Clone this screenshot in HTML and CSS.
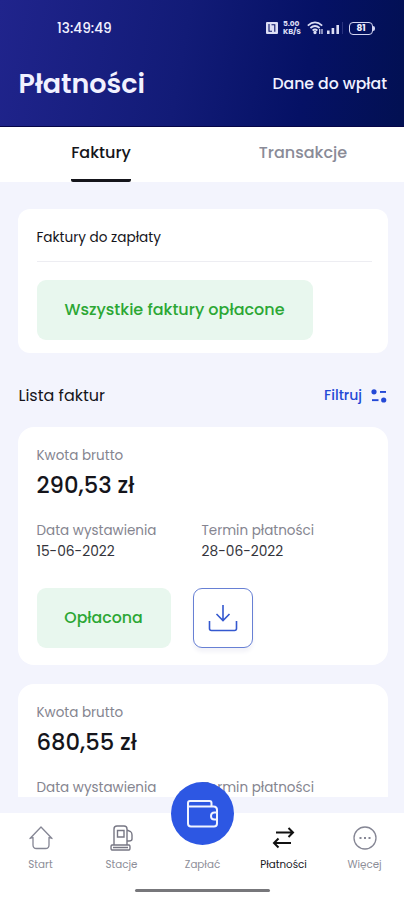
FILE: index.html
```html
<!DOCTYPE html>
<html lang="pl">
<head>
<meta charset="utf-8">
<title>Płatności</title>
<link rel="stylesheet" href="styles.css">
</head>
<body>
<div class="app">
  <header class="header">
    <div class="status">
      <span class="clock">13:49:49</span>
      <div class="status-icons">
        <svg width="12" height="12" viewBox="0 0 12 12"><rect width="12" height="12" rx="1" fill="#dcdef5"/><path d="M3 2v7.300h3M5.500 2.700h3.300v7" fill="none" stroke="#0b1468" stroke-width="1.100"/></svg>
        <span class="speed"><b>5.00</b><b>KB/S</b></span>
        <svg class="wifi" width="17" height="14" viewBox="0 0 17 14" fill="none" stroke="#dcdef5" stroke-width="1.700"><path d="M.8 4.600Q8-1.800 15.200 4.600M3.400 7Q8 3 12.600 7M5.600 9.500Q8 7.500 10.400 9.500"/><circle cx="8" cy="11.500" r=".8" fill="#dcdef5"/><path d="M12.700 8v5M15 8v5" stroke-width="1.200"/></svg>
        <svg class="signal" width="17" height="12" viewBox="0 0 17 12"><path d="M0 8.500h2.600V12H0zM4.600 6h2.600v6H4.600zM9.400 3H12v9H9.400z" fill="#dcdef5"/><path d="M15 0h1v12h-1z" fill="#29327f"/></svg>
        <span class="battery">81</span>
      </div>
    </div>
    <div class="title-row">
      <h1>Płatności</h1>
      <a class="pay-data">Dane do wpłat</a>
    </div>
  </header>
  <nav class="tabs">
    <div class="tab active"><span>Faktury</span></div>
    <div class="tab"><span>Transakcje</span></div>
  </nav>
  <main class="content">
    <section class="card due">
      <h2>Faktury do zapłaty</h2>
      <div class="badge wide"><span>Wszystkie faktury opłacone</span></div>
    </section>
    <div class="list-head">
      <span class="list-title">Lista faktur</span>
      <a class="filter"><span>Filtruj</span>
        <svg width="16" height="14" viewBox="0 0 16 14" fill="#2449d6"><circle cx="3" cy="2.800" r="2.600"/><rect x="9" y="2" width="6" height="1.900"/><rect x="1" y="10.200" width="6.500" height="1.900"/><circle cx="12.700" cy="11" r="2.600"/></svg>
      </a>
    </div>
    <article class="card invoice">
      <div class="label">Kwota brutto</div>
      <div class="amount">290,53 zł</div>
      <div class="dates">
        <div><div class="label">Data wystawienia</div><div class="date">15-06-2022</div></div>
        <div><div class="label">Termin płatności</div><div class="date">28-06-2022</div></div>
      </div>
      <div class="actions">
        <div class="badge paid"><span>Opłacona</span></div>
        <button class="download" aria-label="Pobierz"><svg width="30" height="28" viewBox="0 0 30 28" fill="none" stroke="#3458cf" stroke-width="1.600"><path d="M15 1v15M8.500 10l6.500 6.500L21.500 10"/><path d="M1.500 17v7.500q0 2 2 2h23q2 0 2-2V17"/></svg></button>
      </div>
    </article>
    <article class="card invoice cut">
      <div class="label">Kwota brutto</div>
      <div class="amount">680,55 zł</div>
      <div class="dates">
        <div><div class="label">Data wystawienia</div></div>
        <div><div class="label">Termin płatności</div></div>
      </div>
    </article>
  </main>
  <footer class="bottom">
    <div class="item"><svg width="26" height="26" viewBox="0 0 26 26" fill="none" stroke="#858694" stroke-width="1.300" stroke-linejoin="round"><path d="M2 13.500 13 2l11 11.500-3-1V20q0 3.500-3.500 3.500h-9Q5 23.500 5 20v-7.500z"/></svg><span>Start</span></div>
    <div class="item"><svg width="26" height="26" viewBox="0 0 26 26" fill="none" stroke="#777784" stroke-width="1.400"><path d="M5 20V4q0-3 3-3h7q3 0 3 3v16M8.500 5.500H15V12H8.500zM3 20h17q1 0 1 2.500T20 25H3q-1 0-1-2.500T3 20zM4 22.500h15M18 5l3.500 1.500Q23 7.500 23 10v4q0 2-3 2h-2"/></svg><span>Stacje</span></div>
    <div class="item"><i class="spacer"></i><span>Zapłać</span>
      <div class="fab"><svg width="34" height="30" viewBox="0 0 34 30" fill="none" stroke="#f1f4ff" stroke-width="2" stroke-linejoin="round"><path d="M25.500 7.500V4q0-2-2-2H4Q2 2 2 4v20.500q0 3 3 3h23q3 0 3-3V11q0-3.500-3.500-3.500H2M31 13.500h-2.500Q25 13.500 25 17t3.500 3.500H31"/></svg></div>
    </div>
    <div class="item on"><svg width="26" height="26" viewBox="0 0 26 26" fill="none" stroke="#111" stroke-width="2"><path d="M5 7.500h17M17.500 3l4.500 4.500-4.500 4.500M20 18H3M7.500 13.500 3 18l4.500 4.500"/></svg><span>Płatności</span></div>
    <div class="item"><svg width="26" height="26" viewBox="0 0 26 26" fill="none" stroke="#858694" stroke-width="1.300"><circle cx="13" cy="13" r="11"/><path d="M7.500 13h2M12 13h2M16.500 13h2" stroke-width="1.800"/></svg><span>Więcej</span></div>
    <div class="handle"></div>
  </footer>
</div>
</body>
</html>
```
FILE: styles.css
```css
* { box-sizing: border-box; }
body { margin: 0; font-family: Poppins, Inter, sans-serif; color: #15151b; }
h1, h2 { margin: 0; }
span { white-space: nowrap; }
.app { width: 404px; height: 900px; overflow: hidden; display: flex; flex-direction: column; background: #f3f4fd; }
.header { height: 127px; background: linear-gradient(100deg, #20248c 0%, #121b77 45%, #051165 75%, #021052 100%); color: #f1f1ff; border-bottom: 1px solid #060547; }
.status { display: flex; justify-content: space-between; height: 56px; padding: 0 30px 0 57px; align-items: center; }
.clock { font-size: 13.7px; font-weight: 500; padding-top: 1px; }
.status-icons { display: flex; align-items: center; gap: 5px; }
.speed { display: flex; flex-direction: column; font-size: 7.5px; line-height: 8px; letter-spacing: -.1px; width: 19px; color: #dcdef5; }
.speed b { height: 8px; }
.signal { margin-left: -2px; }
.battery { position: relative; border: 1.5px solid #d4d6f2; border-radius: 4px; width: 24px; height: 13px; font-size: 9px; font-weight: 700; line-height: 11px; text-align: center; margin-right: 1px; }
.battery::after { content: ""; position: absolute; right: -3px; top: 3px; width: 2px; height: 5px; border-radius: 0 2px 2px 0; background: #d4d6f2; }
.title-row { display: flex; justify-content: space-between; align-items: center; height: 56px; padding: 0 17px 0 18.5px; }
h1 { font-size: 27px; font-weight: 600; }
.pay-data { font-size: 15.7px; font-weight: 500; margin-top: -2px; }
.tabs { display: grid; grid-template-columns: 1fr 1fr; height: 55px; background: #fff; }
.tab { display: flex; justify-content: center; font-size: 16px; font-weight: 500; line-height: 52px; color: #8a8b97; }
.active { color: #15151b; }
.active span { border-bottom: 3px solid #15151b; border-radius: 2px; }
.content { padding: 27px 16px 0 18px; height: 631px; display: flex; flex-direction: column; }
.card { background: #fff; border-radius: 12px; flex: none; padding: 0 16px 0 18.5px; }
.due { height: 144px; }
.due h2 { height: 53px; line-height: 57px; border-bottom: 1px solid #ededf2; font-size: 13.6px; font-weight: 400; margin-bottom: 18px; }
.badge { background: #e8f7ee; color: #2ca734; border-radius: 9px; height: 60px; display: flex; align-items: center; justify-content: center; font-size: 16px; font-weight: 500; padding-bottom: 2px; }
.wide { width: 276px; }
.list-head { display: flex; justify-content: space-between; align-items: center; height: 74px; padding-top: 11px; }
.list-title { font-size: 16px; padding-left: .5px; }
.filter { display: flex; gap: 9px; align-items: center; color: #2449d6; font-size: 14px; font-weight: 500; padding-right: 1px; }
.invoice { height: 238px; border-radius: 16px; margin-bottom: 19px; padding-top: 18px; }
.label { font-size: 13.5px; line-height: 21px; color: #858590; white-space: nowrap; }
.amount { font-size: 22.7px; font-weight: 500; line-height: 38px; }
.dates { display: grid; grid-template-columns: 165px 1fr; padding-top: 16px; }
.date { font-size: 13.8px; line-height: 20px; color: #34343b; margin-top: 1px; }
.actions { display: flex; gap: 22px; padding-top: 26px; }
.paid { width: 134px; font-size: 15.8px; }
.download { width: 60px; height: 60px; border: 1.5px solid #6780d4; border-radius: 9px; background: #fff; display: grid; place-items: center; padding: 0; box-shadow: 0 4px 4px #f3f3f8; }
.cut { height: 113px; border-radius: 16px 16px 0 0; margin-bottom: 0; overflow: hidden; }
.bottom { position: relative; height: 87px; background: #fff; display: grid; grid-template-columns: repeat(5, 81px); flex: none; }
.item { position: relative; display: flex; flex-direction: column; align-items: center; padding-top: 12px; font-size: 10.3px; line-height: 14px; color: #8d8e98; }
.item > span { margin-top: 7px; }
.spacer { height: 26px; }
.on { color: #15151b; }
.fab { position: absolute; top: -31px; left: 9px; width: 63px; height: 63px; border-radius: 50%; background: #2d57e3; display: grid; place-items: center; }
.handle { position: absolute; left: 135px; top: 76px; width: 135px; height: 3px; border-radius: 2px; background: #77777b; }
```
